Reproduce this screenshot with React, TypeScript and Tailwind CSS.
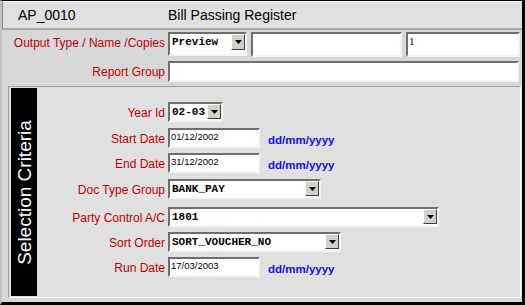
import React from "react";

const Btn = ({ h = 15 }: { h?: number }) => (
  <div
    className="w-[14px] shrink-0 bg-[#d4d0c8] border border-t-white border-l-white border-b-[#404040] border-r-[#404040] flex items-center justify-center"
    style={{ height: h }}
  >
    <svg width="7" height="4" viewBox="0 0 7 4">
      <polygon points="0,0 7,0 3.5,4" fill="#000" />
    </svg>
  </div>
);

const Select = ({
  w,
  h = 20,
  value,
  btnH = 15,
  top = false,
}: {
  w: number;
  h?: number;
  value: string;
  btnH?: number;
  top?: boolean;
}) => (
  <div
    className="bg-white border-2 border-t-[#6e6e6e] border-l-[#6e6e6e] border-b-[#f4f4f4] border-r-[#f4f4f4] flex justify-between"
    style={{ width: w, height: h, alignItems: top ? "flex-start" : "center" }}
  >
    <span
      className={`pl-[2px] font-bold text-[11px] leading-[13px] text-black ${top ? "pt-[2px]" : ""}`}
      style={{ fontFamily: '"Liberation Mono", "Courier New", monospace' }}
    >
      {value}
    </span>
    <div className="self-start">
      <Btn h={btnH} />
    </div>
  </div>
);

const Input = ({
  w,
  h = 20,
  value = "",
  serif = false,
}: {
  w: number;
  h?: number;
  value?: string;
  serif?: boolean;
}) => (
  <div
    className="bg-white border-2 border-t-[#6e6e6e] border-l-[#6e6e6e] border-b-[#f4f4f4] border-r-[#f4f4f4] flex items-start"
    style={{ width: w, height: h }}
  >
    <span
      className={
        serif
          ? "pl-[1px] pt-[1px] text-[11px] leading-[12px] text-black"
          : "pl-[1px] pt-[1px] text-[9.5px] leading-[12px] text-black"
      }
      style={{
        fontFamily: serif
          ? '"Liberation Serif", "Times New Roman", serif'
          : '"Liberation Sans", Arial, sans-serif',
      }}
    >
      {value}
    </span>
  </div>
);

const Label = ({ children, w }: { children: React.ReactNode; w: number }) => (
  <div
    className="text-right text-[12px] leading-[14px] text-[#bb0000] pt-[4px] shrink-0 whitespace-nowrap"
    style={{ width: w }}
  >
    {children}
  </div>
);

const Fmt = () => (
  <span className="ml-[8px] text-[11.5px] font-bold text-[#1010ee] pt-[4px]">dd/mm/yyyy</span>
);

export default function App() {
  return (
    <div
      className="w-[525px] h-[305px] bg-[#d8d8d8] border-t border-t-black border-r-[3px] border-r-black border-b-[3px] border-b-black border-l-2 border-l-[#c4c4c4] flex flex-col overflow-hidden"
      style={{ fontFamily: '"Liberation Sans", Arial, sans-serif' }}
    >
      {/* Header */}
      <div className="h-[29px] shrink-0 bg-[#e0e0e0] border-l border-l-[#8a8a8a] border-t border-t-white border-b-2 border-b-[#a8a8a8] flex items-center text-[14px] text-black">
        <span className="pl-[15px] w-[165px]">AP_0010</span>
        <span>Bill Passing Register</span>
      </div>

      {/* Output rows */}
      <div className="flex flex-col pt-[2px]">
        <div className="flex items-start h-[25px]">
          <Label w={163}>Output Type / Name /Copies</Label>
          <div className="ml-[3px] flex gap-[4px]">
            <Select w={79} h={24} value="Preview" btnH={16} top />
            <Input w={151} h={25} />
            <Input w={114} h={25} value="1" serif />
          </div>
        </div>
        <div className="flex items-start h-[21px] mt-[4px]">
          <Label w={163}>Report Group</Label>
          <div className="ml-[3px]">
            <Input w={351} h={21} />
          </div>
        </div>
      </div>

      {/* Section */}
      <div className="mt-[4px] ml-[6px] mr-[1px] h-[212px] bg-[#e0e0e0] border border-t-[#a0a0a0] border-l-[#a0a0a0] border-b-white border-r-white pl-[2px] py-[1px] flex">
        <div className="w-[26px] h-full bg-black flex items-center justify-center overflow-hidden shrink-0">
          <span className="text-white text-[19px] whitespace-nowrap -rotate-90 leading-none">
            Selection Criteria
          </span>
        </div>
        <div className="flex flex-col pt-[14px]">
          <div className="flex items-start h-[20px]">
            <Label w={128}>Year Id</Label>
            <div className="ml-[3px]">
              <Select w={55} value="02-03" />
            </div>
          </div>
          <div className="flex items-start h-[20px] mt-[6px]">
            <Label w={128}>Start Date</Label>
            <div className="ml-[3px] flex items-start">
              <Input w={92} value="01/12/2002" />
              <Fmt />
            </div>
          </div>
          <div className="flex items-start h-[20px] mt-[5px]">
            <Label w={128}>End Date</Label>
            <div className="ml-[3px] flex items-start">
              <Input w={92} value="31/12/2002" />
              <Fmt />
            </div>
          </div>
          <div className="flex items-start h-[20px] mt-[6px]">
            <Label w={128}>Doc Type Group</Label>
            <div className="ml-[3px]">
              <Select w={153} value="BANK_PAY" />
            </div>
          </div>
          <div className="flex items-start h-[20px] mt-[8px]">
            <Label w={128}>Party Control A/C</Label>
            <div className="ml-[3px]">
              <Select w={271} value="1801" />
            </div>
          </div>
          <div className="flex items-start h-[20px] mt-[5px]">
            <Label w={128}>Sort Order</Label>
            <div className="ml-[3px]">
              <Select w={173} value="SORT_VOUCHER_NO" />
            </div>
          </div>
          <div className="flex items-start h-[20px] mt-[5px]">
            <Label w={128}>Run Date</Label>
            <div className="ml-[3px] flex items-start">
              <Input w={92} value="17/03/2003" />
              <Fmt />
            </div>
          </div>
        </div>
      </div>
    </div>
  );
}
